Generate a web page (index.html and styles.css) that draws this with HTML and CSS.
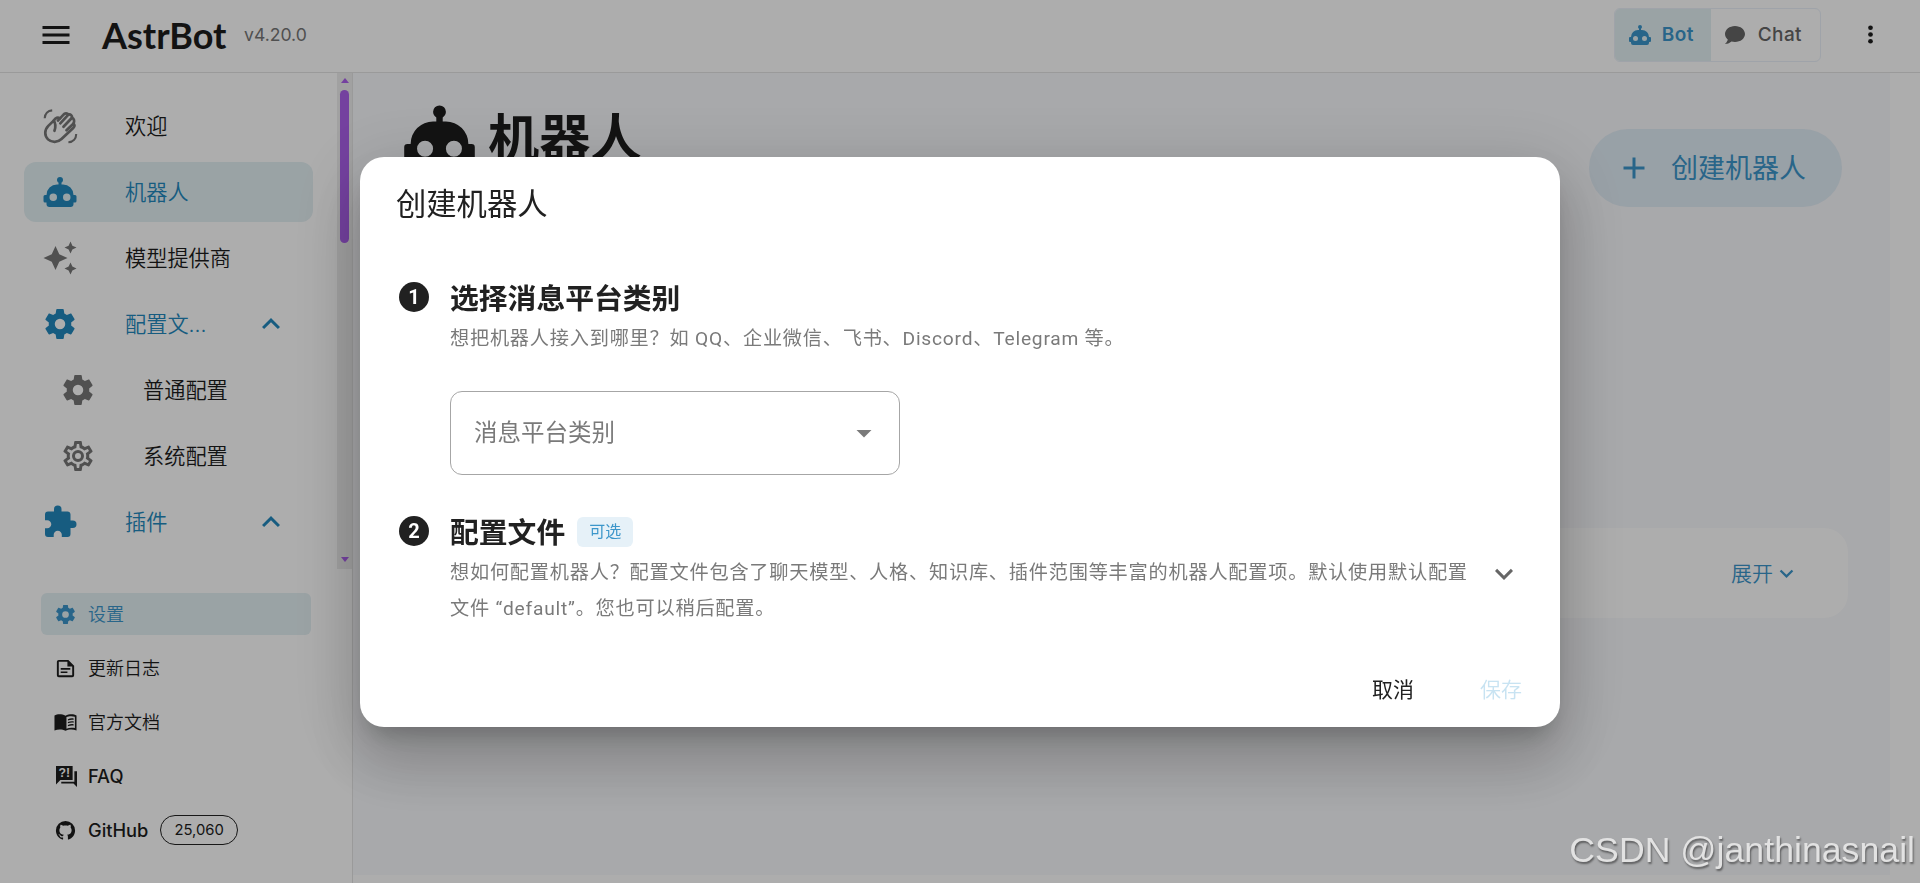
FILE: index.html
```html
<!DOCTYPE html>
<html lang="zh-CN">
<head>
  <meta charset="UTF-8">
  <meta name="viewport" content="width=device-width, initial-scale=1.0">
  <title>AstrBot</title>
  <link rel="stylesheet" href="styles.css">
</head>
<body>

  <!-- Icons -->
  <svg class="sprite" xmlns="http://www.w3.org/2000/svg">
    <symbol id="i-menu" viewBox="0 0 24 24"><path d="M3,6H21V8H3V6M3,11H21V13H3V11M3,16H21V18H3V16Z"/></symbol>
    <symbol id="i-robot" viewBox="0 0 24 24"><path d="M12,2A2,2 0 0,1 14,4C14,4.74 13.6,5.39 13,5.73V7H14A7,7 0 0,1 21,14H22A1,1 0 0,1 23,15V18A1,1 0 0,1 22,19H21V20A2,2 0 0,1 19,22H5A2,2 0 0,1 3,20V19H2A1,1 0 0,1 1,18V15A1,1 0 0,1 2,14H3A7,7 0 0,1 10,7H11V5.73C10.4,5.39 10,4.74 10,4A2,2 0 0,1 12,2M7.5,13A2.5,2.5 0 0,0 5,15.5A2.5,2.5 0 0,0 7.5,18A2.5,2.5 0 0,0 10,15.5A2.5,2.5 0 0,0 7.5,13M16.5,13A2.5,2.5 0 0,0 14,15.5A2.5,2.5 0 0,0 16.5,18A2.5,2.5 0 0,0 19,15.5A2.5,2.5 0 0,0 16.5,13Z"/></symbol>
    <symbol id="i-chat" viewBox="0 0 24 24"><path d="M12,3C17.5,3 22,6.58 22,11C22,15.42 17.5,19 12,19C10.76,19 9.57,18.82 8.47,18.5C5.55,21 2,21 2,21C4.33,18.67 4.7,17.1 4.75,16.5C3.05,15.07 2,13.13 2,11C2,6.58 6.5,3 12,3Z"/></symbol>
    <symbol id="i-dots" viewBox="0 0 24 24"><circle cx="12" cy="6" r="2.1"/><circle cx="12" cy="12" r="2.1"/><circle cx="12" cy="18" r="2.1"/></symbol>
    <symbol id="i-wave" viewBox="0 0 24 24">
      <g fill="none" stroke="currentColor" stroke-width="1.8" stroke-linecap="round" stroke-linejoin="round">
        <path d="M8.3 15.2C9.2 12.8 9.2 10.5 7.8 8.4L4.2 11.9C1.5 14.700 1.6 18.600 4 20.900C6.500 23.200 10.600 23 13 20.700L21 13.100C22 12.100 21.800 11 20.900 10.500L16.300 14.800"/>
        <path d="M7.8 8.4C9 6.400 10.600 6 12 6.900L14.200 4.600C15.200 3.300 16.900 3.300 17.600 4.400C19.100 4 20.300 5.200 20 6.500C21.400 7 21.900 8.900 20.900 10.500"/>
        <path d="M12 6.900L10.600 8.400M17.600 4.400L12.200 10.200M20 6.500L14.300 12.500"/>
      </g>
      <path d="M1.8 6.8C1.900 4 3.900 1.800 6.800 1.600M22.800 17.400C22.800 20.400 20.800 22.700 17.600 22.800" fill="none" stroke="currentColor" stroke-width="1.4"/>
    </symbol>
    <symbol id="i-creation" viewBox="0 0 24 24"><path d="M19,1L17.74,3.75L15,5L17.74,6.26L19,9L20.25,6.26L23,5L20.25,3.75M9,4L6.5,9.5L1,12L6.5,14.5L9,20L11.5,14.5L17,12L11.5,9.5M19,15L17.74,17.74L15,19L17.74,20.25L19,23L20.25,20.25L23,19L20.25,17.74"/></symbol>
    <symbol id="i-cog" viewBox="0 0 24 24"><path d="M12,15.5A3.5,3.5 0 0,1 8.5,12A3.5,3.5 0 0,1 12,8.5A3.5,3.5 0 0,1 15.5,12A3.5,3.5 0 0,1 12,15.5M19.43,12.97C19.47,12.65 19.5,12.33 19.5,12C19.5,11.67 19.47,11.34 19.43,11L21.54,9.37C21.73,9.22 21.78,8.95 21.66,8.73L19.66,5.27C19.54,5.05 19.27,4.96 19.05,5.05L16.56,6.05C16.04,5.66 15.5,5.32 14.87,5.07L14.5,2.42C14.46,2.18 14.25,2 14,2H10C9.75,2 9.54,2.18 9.5,2.42L9.13,5.07C8.5,5.32 7.96,5.66 7.44,6.05L4.95,5.05C4.73,4.96 4.46,5.05 4.34,5.27L2.34,8.73C2.21,8.95 2.27,9.22 2.46,9.37L4.57,11C4.53,11.34 4.5,11.67 4.5,12C4.5,12.33 4.53,12.65 4.57,12.97L2.46,14.63C2.27,14.78 2.21,15.05 2.34,15.27L4.34,18.73C4.46,18.95 4.73,19.03 4.95,18.95L7.44,17.94C7.96,18.34 8.5,18.68 9.13,18.93L9.5,21.58C9.54,21.82 9.75,22 10,22H14C14.25,22 14.46,21.82 14.5,21.58L14.87,18.93C15.5,18.67 16.04,18.34 16.56,17.94L19.05,18.95C19.27,19.03 19.54,18.95 19.66,18.73L21.66,15.27C21.78,15.05 21.73,14.78 21.54,14.63L19.43,12.97Z"/></symbol>
    <symbol id="i-cog-outline" viewBox="0 0 24 24"><path d="M12,8A4,4 0 0,1 16,12A4,4 0 0,1 12,16A4,4 0 0,1 8,12A4,4 0 0,1 12,8M12,10A2,2 0 0,0 10,12A2,2 0 0,0 12,14A2,2 0 0,0 14,12A2,2 0 0,0 12,10M10,22C9.75,22 9.54,21.82 9.5,21.58L9.13,18.93C8.5,18.68 7.96,18.34 7.44,17.94L4.95,18.95C4.73,19.03 4.46,18.95 4.34,18.73L2.34,15.27C2.21,15.05 2.27,14.78 2.46,14.63L4.57,12.97L4.5,12L4.57,11L2.46,9.37C2.27,9.22 2.21,8.95 2.34,8.73L4.34,5.27C4.46,5.05 4.73,4.96 4.95,5.05L7.44,6.05C7.96,5.66 8.5,5.32 9.13,5.07L9.5,2.42C9.54,2.18 9.75,2 10,2H14C14.25,2 14.46,2.18 14.5,2.42L14.87,5.07C15.5,5.32 16.04,5.66 16.56,6.05L19.05,5.05C19.27,4.96 19.54,5.05 19.66,5.27L21.66,8.73C21.79,8.95 21.73,9.22 21.54,9.37L19.43,11L19.5,12L19.43,13L21.54,14.63C21.73,14.78 21.79,15.05 21.66,15.27L19.66,18.73C19.54,18.95 19.27,19.04 19.05,18.95L16.56,17.95C16.04,18.34 15.5,18.68 14.87,18.93L14.5,21.58C14.46,21.82 14.25,22 14,22H10M11.25,4L10.88,6.61C9.68,6.86 8.62,7.5 7.85,8.39L5.44,7.35L4.69,8.65L6.8,10.2C6.4,11.37 6.4,12.64 6.8,13.8L4.68,15.36L5.43,16.66L7.86,15.62C8.63,16.5 9.68,17.14 10.87,17.38L11.24,20H12.76L13.13,17.39C14.32,17.14 15.37,16.5 16.14,15.62L18.57,16.66L19.32,15.36L17.2,13.81C17.6,12.64 17.6,11.37 17.2,10.2L19.31,8.65L18.56,7.35L16.15,8.39C15.38,7.5 14.32,6.86 13.12,6.62L12.75,4H11.25Z"/></symbol>
    <symbol id="i-puzzle" viewBox="0 0 24 24"><path d="M20.5,11H19V7C19,5.89 18.1,5 17,5H13V3.5A2.5,2.5 0 0,0 10.5,1A2.5,2.5 0 0,0 8,3.5V5H4A2,2 0 0,0 2,7V10.8H3.5C5,10.8 6.2,12 6.2,13.5C6.2,15 5,16.2 3.5,16.2H2V20A2,2 0 0,0 4,22H7.8V20.5C7.8,19 9,17.8 10.5,17.8C12,17.8 13.2,19 13.2,20.5V22H17A2,2 0 0,0 19,20V16H20.5A2.5,2.5 0 0,0 23,13.5A2.5,2.5 0 0,0 20.5,11Z"/></symbol>
    <symbol id="i-up" viewBox="0 0 24 24"><path d="M7.41,15.41L12,10.83L16.59,15.41L18,14L12,8L6,14L7.41,15.41Z"/></symbol>
    <symbol id="i-down" viewBox="0 0 24 24"><path d="M7.41,8.58L12,13.17L16.59,8.58L18,10L12,16L6,10L7.41,8.58Z"/></symbol>
    <symbol id="i-caret" viewBox="0 0 24 24"><path d="M7,10L12,15L17,10H7Z"/></symbol>
    <symbol id="i-plus" viewBox="0 0 24 24"><path d="M19,13H13V19H11V13H5V11H11V5H13V11H19V13Z"/></symbol>
    <symbol id="i-note" viewBox="0 0 24 24"><path fill-rule="evenodd" d="M5,3H15L21,9V19A2,2 0 0,1 19,21H5A2,2 0 0,1 3,19V5A2,2 0 0,1 5,3M5,5V19H19V10H14V5H5M7,11.5H17V13.3H7V11.5M7,15H14V16.8H7V15Z"/></symbol>
    <symbol id="i-book" viewBox="0 0 24 24"><path fill-rule="evenodd" d="M12,5C10,3.8 7.8,3.5 5.7,3.5C3.8,3.5 2.2,3.9 0.5,4.8V20.3C2.2,19.6 4,19.2 6,19.2C8.2,19.2 10.3,19.6 12,20.6C13.7,19.6 15.8,19.2 18,19.2C20,19.2 21.8,19.6 23.5,20.3V4.8C21.8,3.9 20.2,3.5 18.3,3.5C16.2,3.5 14,3.8 12,5M13,6.3C15,5.2 19.5,5 21.8,6V17.8C19,17.1 15.5,17.2 13,18.5V6.3M14.5,8.5C16.5,7.7 18.5,7.5 20.5,7.8V9.2C18.5,8.9 16.5,9.1 14.5,9.9V8.5M14.5,11.5C16.5,10.7 18.5,10.5 20.5,10.8V12.2C18.5,11.9 16.5,12.1 14.5,12.9V11.5M14.5,14.5C16.5,13.7 18.5,13.5 20.5,13.8V15.2C18.5,14.9 16.5,15.1 14.5,15.9V14.5"/></symbol>
    <symbol id="i-faq" viewBox="0 0 24 24"><path d="M0,0H19V16H5L0,21V0M21,6H24V24L20,20H6V18H21V6Z"/><text x="9.5" y="13" text-anchor="middle" class="faq-mark">?!</text></symbol>
    <symbol id="i-github" viewBox="0 0 24 24"><path d="M12,2A10,10 0 0,0 2,12C2,16.42 4.87,20.17 8.84,21.5C9.34,21.58 9.5,21.27 9.5,21C9.5,20.77 9.5,20.14 9.5,19.31C6.73,19.91 6.14,17.97 6.14,17.97C5.68,16.81 5.03,16.5 5.03,16.5C4.12,15.88 5.1,15.9 5.1,15.9C6.1,15.97 6.63,16.93 6.63,16.93C7.5,18.45 8.97,18 9.54,17.76C9.63,17.11 9.89,16.67 10.17,16.42C7.95,16.17 5.62,15.31 5.62,11.5C5.62,10.39 6,9.5 6.65,8.79C6.55,8.54 6.2,7.5 6.75,6.15C6.75,6.15 7.59,5.88 9.5,7.17C10.29,6.95 11.15,6.84 12,6.84C12.85,6.84 13.71,6.95 14.5,7.17C16.41,5.88 17.25,6.15 17.25,6.15C17.8,7.5 17.45,8.54 17.35,8.79C18,9.5 18.38,10.39 18.38,11.5C18.38,15.32 16.04,16.16 13.81,16.41C14.17,16.72 14.5,17.33 14.5,18.26C14.5,19.6 14.5,20.68 14.5,21C14.5,21.27 14.66,21.59 15.17,21.5C19.14,20.16 22,16.42 22,12A10,10 0 0,0 12,2Z"/></symbol>
  </svg>

  <!-- Header -->
  <header class="topbar">
    <svg class="icon menu-btn"><use href="#i-menu"/></svg>
    <div class="logo">AstrBot</div>
    <div class="version">v4.20.0</div>
    <div class="mode-toggle">
      <div class="mode active"><svg class="icon sm"><use href="#i-robot"/></svg><span>Bot</span></div>
      <div class="mode"><svg class="icon sm"><use href="#i-chat"/></svg><span>Chat</span></div>
    </div>
    <svg class="icon dots"><use href="#i-dots"/></svg>
  </header>

  <div class="layout">
    <!-- Sidebar -->
    <aside class="sidebar">
      <div class="nav-scroll">
        <nav class="nav">
          <div class="nav-item"><svg class="icon"><use href="#i-wave"/></svg><span>欢迎</span></div>
          <div class="nav-item active"><svg class="icon"><use href="#i-robot"/></svg><span>机器人</span></div>
          <div class="nav-item"><svg class="icon"><use href="#i-creation"/></svg><span>模型提供商</span></div>
          <div class="nav-item group"><svg class="icon"><use href="#i-cog"/></svg><span>配置文...</span><svg class="icon arrow"><use href="#i-up"/></svg></div>
          <div class="nav-item child"><svg class="icon"><use href="#i-cog"/></svg><span>普通配置</span></div>
          <div class="nav-item child"><svg class="icon"><use href="#i-cog-outline"/></svg><span>系统配置</span></div>
          <div class="nav-item group"><svg class="icon"><use href="#i-puzzle"/></svg><span>插件</span><svg class="icon arrow"><use href="#i-up"/></svg></div>
        </nav>
        <div class="scrollbar">
          <i class="sb-up"></i>
          <i class="sb-thumb"></i>
          <i class="sb-down"></i>
        </div>
      </div>
      <div class="side-footer">
        <div class="foot-item active"><svg class="icon xs"><use href="#i-cog"/></svg><span>设置</span></div>
        <div class="foot-item"><svg class="icon xs"><use href="#i-note"/></svg><span>更新日志</span></div>
        <div class="foot-item"><svg class="icon xs"><use href="#i-book"/></svg><span>官方文档</span></div>
        <div class="foot-item"><svg class="icon xs faq"><use href="#i-faq"/></svg><span>FAQ</span></div>
        <div class="foot-item"><svg class="icon xs"><use href="#i-github"/></svg><span>GitHub</span><span class="stars">25,060</span></div>
      </div>
    </aside>

    <!-- Page -->
    <main class="page">
      <div class="page-head">
        <h1><svg class="icon"><use href="#i-robot"/></svg><span>机器人</span></h1>
        <div class="create-btn"><svg class="icon"><use href="#i-plus"/></svg><span>创建机器人</span></div>
      </div>
      <div class="log-card"><span>展开</span><svg class="icon"><use href="#i-down"/></svg></div>
    </main>
  </div>

  <!-- Create dialog -->
  <div class="overlay">
    <div class="dialog">
      <h2>创建机器人</h2>
      <section class="step">
        <div class="step-num">1</div>
        <div class="step-body">
          <h3>选择消息平台类别</h3>
          <p>想把机器人接入到哪里？如 QQ、企业微信、飞书、Discord、Telegram 等。</p>
          <div class="select"><span>消息平台类别</span><svg class="icon"><use href="#i-caret"/></svg></div>
        </div>
      </section>
      <section class="step">
        <div class="step-num">2</div>
        <div class="step-body">
          <h3>配置文件 <span class="chip">可选</span></h3>
          <p>想如何配置机器人？配置文件包含了聊天模型、人格、知识库、插件范围等丰富的机器人配置项。默认使用默认配置文件 “default”。您也可以稍后配置。</p>
        </div>
        <svg class="icon expand"><use href="#i-down"/></svg>
      </section>
      <div class="actions">
        <span>取消</span>
        <span class="disabled">保存</span>
      </div>
    </div>
  </div>

  <div class="watermark">CSDN @janthinasnail</div>
</body>
</html>
```

FILE: styles.css
```css
* { margin:0; padding:0; box-sizing:border-box; }
body { height:100vh; overflow:hidden; background:#fff; color:#1c1c1c; font-family:Inter, 'Noto Sans CJK SC', sans-serif; font-weight:350; display:flex; flex-direction:column; }
.sprite { display:none; }
.icon { width:36px; height:36px; flex:none; fill:currentColor; }
.icon.sm { width:24px; height:24px; }
.icon.xs { width:23px; height:23px; }

/* Header */
.topbar { height:73px; flex:none; border-bottom:1px solid #e4e4e4; display:flex; align-items:center; padding:0 36px 3px 37.5px; }
.logo { margin-left:28.5px; font-family:Lato, sans-serif; font-weight:700; font-size:36px; width:142px; }
.version { font-size:17.6px; font-weight:400; color:#767676; }
.mode-toggle { margin-left:auto; height:54px; display:flex; border:1px solid #eaf1fa; border-radius:6px; overflow:hidden; }
.mode { display:flex; align-items:center; gap:11px; padding:0 18px 0 12px; font-size:19px; font-weight:500; letter-spacing:0.4px; color:#666; }
.mode.active { background:#e4f0f4; color:#3c96ca; font-weight:600; gap:10px; padding:0 17px 0 13px; }
.dots { width:27px; height:27px; margin-left:36px; }

.layout { flex:1; display:flex; min-height:0; }

/* Sidebar */
.sidebar { width:353px; border-right:1px solid #e4e4e4; display:flex; flex-direction:column; }
.nav-scroll { height:496px; display:flex; }
.nav { flex:1; padding:23px 24px 0; display:flex; flex-direction:column; gap:6px; overflow:hidden; }
.nav-item { height:60px; flex:none; display:flex; align-items:center; padding:0 24px 0 18px; border-radius:12px; font-size:21.2px; }
.nav-item span { padding-bottom:3px; }
.nav-item > .icon:first-child { margin-right:47px; color:#767676; }
.nav-item.child { padding-left:36px; }
.nav-item.active { background:#e4f0f4; }
.nav-item.active, .nav-item.group, .nav-item.active > .icon:first-child, .nav-item.group > .icon:first-child { color:#2288bd; }
.arrow { margin-left:auto; }

.scrollbar { width:15px; background:#ededed; display:flex; flex-direction:column; align-items:center; padding:5px 0 7px; }
.sb-up, .sb-down { border:4.5px solid transparent; }
.sb-up { border-top:0; border-bottom:5px solid #ab60eb; }
.sb-down { border-bottom:0; border-top:5px solid #ab60eb; margin-top:auto; }
.sb-thumb { width:9px; height:153px; margin-top:7px; border-radius:5px; background:#ab60eb; }

.side-footer { padding:24px 41px 0; display:flex; flex-direction:column; gap:12px; }
.foot-item { height:42px; display:flex; align-items:center; padding-left:13px; gap:11px; font-size:18.3px; font-weight:500; border-radius:6px; }
.foot-item:nth-child(-n+3) { font-size:18px; font-weight:350; }
.foot-item:nth-child(-n+3) span { padding-bottom:2px; }
.foot-item.active { background:#e4f0f4; color:#3c96ca; }
.foot-item .faq { width:21px; height:21px; margin-left:2px; }
.faq-mark { fill:#fff; font:700 14px 'Liberation Sans', sans-serif; }
.stars { height:30px; margin-left:1px; border:1px solid #222; border-radius:15px; padding:0 13px; font-size:14.8px; font-weight:400; line-height:28px; }

/* Page */
.page { flex:1; margin:0 30px 8px 0; background:#f8f9fc; padding:26px 42px 0 48px; }
.page-head { display:flex; justify-content:space-between; align-items:flex-start; padding-right:6px; }
h1 { display:flex; align-items:center; gap:10px; height:77px; font-size:51.2px; font-weight:700; }
h1 .icon { width:77px; height:77px; }
h1 span { padding-bottom:5px; }
.create-btn { margin-top:30px; height:78px; width:253px; border-radius:39px; background:#e1edf6; color:#3c96ca; display:flex; align-items:center; padding-left:27px; gap:19px; font-size:27px; font-weight:400; }
.create-btn span { padding-bottom:3px; }
.log-card { margin-top:321px; height:90px; border-radius:24px; background:#fff; color:#3c96ca; display:flex; align-items:center; justify-content:flex-end; padding-right:48px; font-size:21px; }
.log-card span { padding-bottom:2px; }
.log-card .icon { width:27px; height:27px; }

/* Dialog */
.overlay { position:fixed; inset:0; background:rgba(0,0,0,0.32); display:flex; align-items:center; justify-content:center; }
.dialog { width:1200px; height:570px; border-radius:24px; background:#fff; color:#212121; padding:24px 36px 0; display:flex; flex-direction:column; box-shadow:0 16px 22px -10px rgba(0,0,0,0.2), 0 36px 57px 4px rgba(0,0,0,0.14), 0 14px 69px 12px rgba(0,0,0,0.12); }
h2 { font-size:30.3px; font-weight:400; line-height:46px; margin-bottom:49px; }
.step { display:flex; }
.step-num { width:30px; height:30px; margin:6px 21px 0 3px; border-radius:50%; background:#212121; color:#fff; font:700 20px/30px Roboto, sans-serif; text-align:center; }
.step-body { width:1024px; }
h3 { font-size:28.8px; font-weight:700; line-height:45px; display:flex; align-items:center; }
.step p { font-family:Roboto, 'Noto Sans CJK SC', sans-serif; font-size:19.2px; letter-spacing:0.77px; line-height:36px; color:#7a7a7a; font-weight:400; }
.select { width:450px; height:84px; margin:34px 0 35px; border:1px solid #a6a6a6; border-radius:12px; display:flex; align-items:center; justify-content:space-between; padding:0 17px 0 23px; font-size:23.5px; font-weight:400; color:#7a7a7a; }
.select span { padding-bottom:3px; }
.chip { margin-left:12px; height:30px; padding:0 12px; border-radius:6px; background:#e6f1f8; color:#3c96ca; font-size:16px; font-weight:400; line-height:29px; }
.expand { margin:46px 0 0 12px; color:#666; }
.actions { margin-top:auto; height:74px; display:flex; justify-content:flex-end; gap:66px; padding-right:2px; font-size:21px; line-height:73px; font-weight:400; }
.actions .disabled { color:#c8e3f2; font-weight:350; }

.watermark { position:fixed; right:5px; bottom:9px; font-family:'Liberation Sans', sans-serif; font-size:35.7px; line-height:48px; color:#e2e2e2; text-shadow:1px 2px 2px rgba(0,0,0,0.45); }
```
